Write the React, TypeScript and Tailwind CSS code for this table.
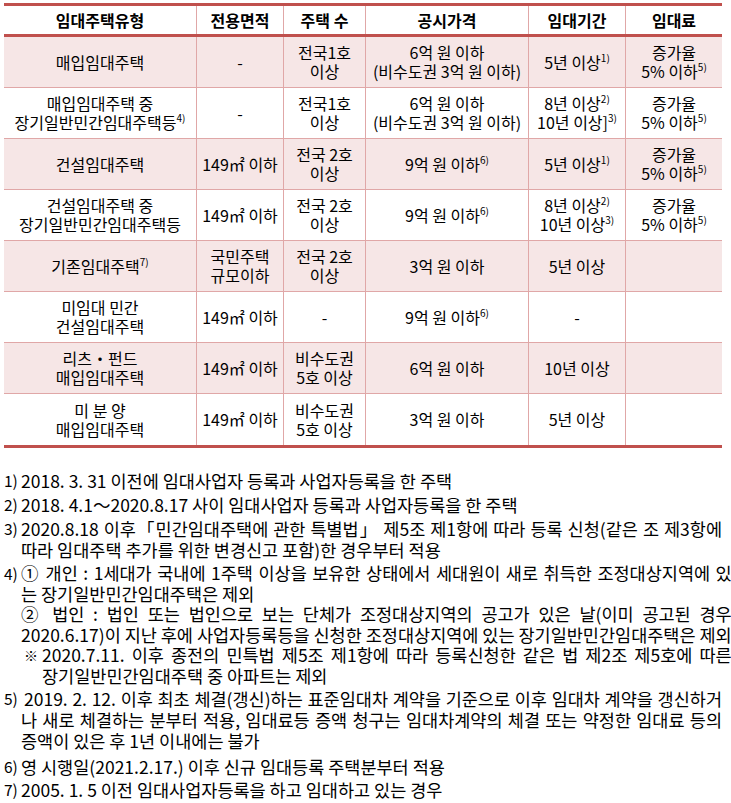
import React from 'react';

const cols = 'grid grid-cols-[192px_87px_82px_163px_97px_97px]';
const line = 'border-[#e0a7a7]';

const Sup = ({ n }: { n: string }) => (
  <sup className="relative -top-[7px] text-[10px] leading-none">{n})</sup>
);

type Row = { pink: boolean; cells: React.ReactNode[] };

const rows: Row[] = [
  {
    pink: true,
    cells: [
      '매입임대주택',
      '-',
      <>전국1호<br />이상</>,
      <>6억 원 이하<br />(비수도권 3억 원 이하)</>,
      <>5년 이상<Sup n="1" /></>,
      <>증가율<br />5% 이하<Sup n="5" /></>,
    ],
  },
  {
    pink: false,
    cells: [
      <>매입임대주택 중<br />장기일반민간임대주택등<Sup n="4" /></>,
      '-',
      <>전국1호<br />이상</>,
      <>6억 원 이하<br />(비수도권 3억 원 이하)</>,
      <>8년 이상<Sup n="2" /><br />10년 이상]<Sup n="3" /></>,
      <>증가율<br />5% 이하<Sup n="5" /></>,
    ],
  },
  {
    pink: true,
    cells: [
      '건설임대주택',
      '149㎡ 이하',
      <>전국 2호<br />이상</>,
      <>9억 원 이하<Sup n="6" /></>,
      <>5년 이상<Sup n="1" /></>,
      <>증가율<br />5% 이하<Sup n="5" /></>,
    ],
  },
  {
    pink: false,
    cells: [
      <>건설임대주택 중<br />장기일반민간임대주택등</>,
      '149㎡ 이하',
      <>전국 2호<br />이상</>,
      <>9억 원 이하<Sup n="6" /></>,
      <>8년 이상<Sup n="2" /><br />10년 이상<Sup n="3" /></>,
      <>증가율<br />5% 이하<Sup n="5" /></>,
    ],
  },
  {
    pink: true,
    cells: [
      <>기존임대주택<Sup n="7" /></>,
      <>국민주택<br />규모이하</>,
      <>전국 2호<br />이상</>,
      '3억 원 이하',
      '5년 이상',
      '',
    ],
  },
  {
    pink: false,
    cells: [
      <>미임대 민간<br />건설임대주택</>,
      '149㎡ 이하',
      '-',
      <>9억 원 이하<Sup n="6" /></>,
      '-',
      '',
    ],
  },
  {
    pink: true,
    cells: [
      <>리츠・펀드<br />매입임대주택</>,
      '149㎡ 이하',
      <>비수도권<br />5호 이상</>,
      '6억 원 이하',
      '10년 이상',
      '',
    ],
  },
  {
    pink: false,
    cells: [
      <>미 분 양<br />매입임대주택</>,
      '149㎡ 이하',
      <>비수도권<br />5호 이상</>,
      '3억 원 이하',
      '5년 이상',
      '',
    ],
  },
];

const headers = ['임대주택유형', '전용면적', '주택 수', '공시가격', '임대기간', '임대료'];

// justified line (fills the width like the original document)
const J = 'whitespace-nowrap [text-align-last:justify]';
const N = 'w-[17px] shrink-0 text-[15.5px]';

export default function App() {
  return (
    <div className="w-[731px] h-[803px] overflow-hidden bg-white text-black font-['Noto_Sans_CJK_KR','Noto_Sans',sans-serif]">
      <div className="ml-[4px] mt-[3px] w-[718px] border-y-[3px] border-[#c0504d] text-[16px] leading-[19px]">
        <div className={`${cols} h-[31px] border-b-[3px] border-[#c0504d] bg-white font-bold`}>
          {headers.map((h, i) => (
            <div key={i} className={`flex items-center justify-center ${i > 0 ? `border-l ${line}` : ''}`}>
              {h}
            </div>
          ))}
        </div>
        {rows.map((r, ri) => (
          <div
            key={ri}
            className={`${cols} h-[51px] ${ri < rows.length - 1 ? `border-b ${line}` : ''} ${r.pink ? 'bg-[#f6e6e6]' : 'bg-white'}`}
          >
            {r.cells.map((c, ci) => (
              <div
                key={ci}
                className={`flex items-center justify-center text-center whitespace-nowrap ${ci > 0 ? `border-l ${line}` : ''}`}
              >
                <div>{c}</div>
              </div>
            ))}
          </div>
        ))}
      </div>

      <div className="ml-[4px] mt-[22px] w-[718px] text-[17.5px] leading-[21px]">
        <div className="flex">
          <span className={N}>1)</span>
          <div>2018. 3. 31 이전에 임대사업자 등록과 사업자등록을 한 주택</div>
        </div>
        <div className="flex mt-[3px]">
          <span className={N}>2)</span>
          <div>2018. 4.1～2020.8.17 사이 임대사업자 등록과 사업자등록을 한 주택</div>
        </div>
        <div className="flex mt-[3px]">
          <span className={N}>3)</span>
          <div className="flex-1">
            <div className={J}>2020.8.18 이후「민간임대주택에 관한 특별법」 제5조 제1항에 따라 등록 신청(같은 조 제3항에</div>
            <div>따라 임대주택 추가를 위한 변경신고 포함)한 경우부터 적용</div>
          </div>
        </div>
        <div className="flex mt-[3px] leading-[20.6px]">
          <span className={N}>4)</span>
          <div className="flex-1">
            <div className={J}>① 개인 : 1세대가 국내에 1주택 이상을 보유한 상태에서 세대원이 새로 취득한 조정대상지역에 있</div>
            <div>는 장기일반민간임대주택은 제외</div>
            <div className={J}>② 법인 : 법인 또는 법인으로 보는 단체가 조정대상지역의 공고가 있은 날(이미 공고된 경우</div>
            <div className={J}>2020.6.17)이 지난 후에 사업자등록등을 신청한 조정대상지역에 있는 장기일반민간임대주택은 제외</div>
            <div className="flex pl-[3px]">
              <span className="w-[18px] shrink-0 text-[14px]">※</span>
              <div className="flex-1">
                <div className={J}>2020.7.11. 이후 종전의 민특법 제5조 제1항에 따라 등록신청한 같은 법 제2조 제5호에 따른</div>
                <div>장기일반민간임대주택 중 아파트는 제외</div>
              </div>
            </div>
          </div>
        </div>
        <div className="flex mt-[1px]">
          <span className={N}>5)</span>
          <div className="flex-1">
            <div className={`${J} pl-[3px]`}>2019. 2. 12. 이후 최초 체결(갱신)하는 표준임대차 계약을 기준으로 이후 임대차 계약을 갱신하거</div>
            <div className={J}>나 새로 체결하는 분부터 적용, 임대료등 증액 청구는 임대차계약의 체결 또는 약정한 임대료 등의</div>
            <div>증액이 있은 후 1년 이내에는 불가</div>
          </div>
        </div>
        <div className="flex mt-[5px]">
          <span className={N}>6)</span>
          <div>영 시행일(2021.2.17.) 이후 신규 임대등록 주택분부터 적용</div>
        </div>
        <div className="flex mt-[2px]">
          <span className={N}>7)</span>
          <div>2005. 1. 5 이전 임대사업자등록을 하고 임대하고 있는 경우</div>
        </div>
      </div>
    </div>
  );
}
